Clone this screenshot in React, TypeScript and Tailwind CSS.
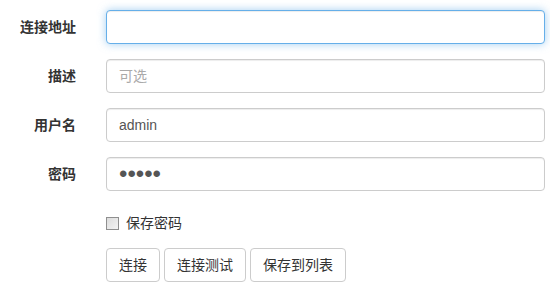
import React from 'react';

const font = { fontFamily: '"Liberation Sans", "Noto Sans CJK SC", sans-serif' };

export default function App() {
  const rows = [
    { label: '连接地址', type: 'text', value: '', placeholder: '', focus: true },
    { label: '描述', type: 'text', value: '', placeholder: '可选' },
    { label: '用户名', type: 'text', value: 'admin', placeholder: '' },
    { label: '密码', type: 'password', value: 'admin', placeholder: '' },
  ];

  return (
    <div
      className="w-[550px] h-[288px] bg-white pt-[10px] pr-[5px] text-[14px] text-[#333] overflow-hidden"
      style={font}
    >
      {rows.map((row) => (
        <div key={row.label} className="flex items-center gap-[30px] mb-[15px]">
          <label className="w-[76px] text-right font-bold leading-[20px] shrink-0">{row.label}</label>
          <input
            type={row.type}
            defaultValue={row.value}
            placeholder={row.placeholder}
            className={`flex-1 h-[34px] px-[12px] py-0 rounded-[4px] border bg-white text-[#555] outline-none placeholder:text-[#aaa] ${
              row.type === 'password' ? 'text-[24px] tracking-[0px]' : 'text-[14px]'
            } ${
              row.focus
                ? 'border-[#66afe9] shadow-[inset_0_1px_1px_rgba(0,0,0,0.075),0_0_8px_rgba(102,175,233,0.6)]'
                : 'border-[#ccc] shadow-[inset_0_1px_1px_rgba(0,0,0,0.075)]'
            }`}
            style={font}
          />
        </div>
      ))}

      <div className="pl-[106px] pt-[7px] mb-[15px] h-[27px] flex items-center">
        <label className="flex items-center leading-[20px] h-[20px]">
          <span className="w-[13px] h-[13px] border border-[#8f8f8f] bg-gradient-to-br from-[#dcdcdc] to-[#f4f4f4] mr-[7px]" />
          <span>保存密码</span>
        </label>
      </div>

      <div className="pl-[106px] flex gap-[4px]">
        {['连接', '连接测试', '保存到列表'].map((b) => (
          <button
            key={b}
            className="h-[34px] px-[12px] border border-[#ccc] rounded-[4px] bg-white text-[#333] text-[14px] leading-[20px]"
            style={font}
          >
            {b}
          </button>
        ))}
      </div>
    </div>
  );
}
